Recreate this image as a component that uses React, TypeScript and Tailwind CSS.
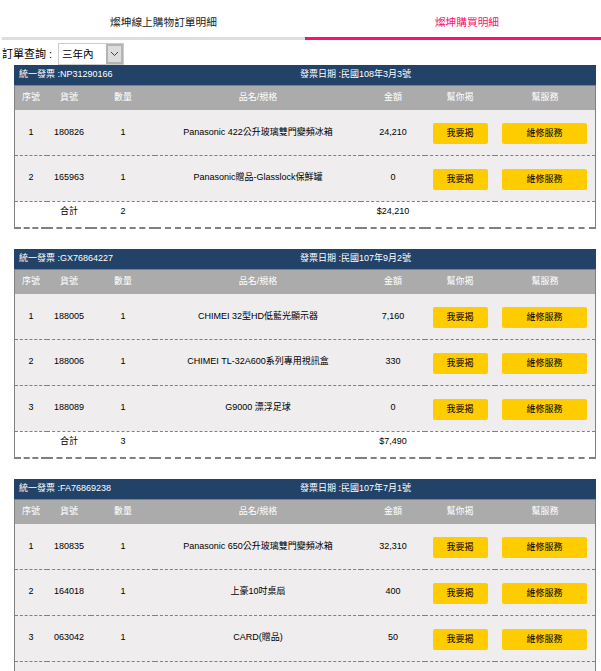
import React from "react";

type Item = { no: string; sku: string; qty: string; name: string; price: string };
type Invoice = { id: string; date: string; items: Item[]; count: string; total: string };

const invoices: Invoice[] = [
  {
    id: "NP31290166",
    date: "民國108年3月3號",
    count: "2",
    total: "$24,210",
    items: [
      { no: "1", sku: "180826", qty: "1", name: "Panasonic 422公升玻璃雙門變頻冰箱", price: "24,210" },
      { no: "2", sku: "165963", qty: "1", name: "Panasonic贈品-Glasslock保鮮罐", price: "0" },
    ],
  },
  {
    id: "GX76864227",
    date: "民國107年9月2號",
    count: "3",
    total: "$7,490",
    items: [
      { no: "1", sku: "188005", qty: "1", name: "CHIMEI 32型HD低藍光顯示器", price: "7,160" },
      { no: "2", sku: "188006", qty: "1", name: "CHIMEI TL-32A600系列專用視訊盒", price: "330" },
      { no: "3", sku: "188089", qty: "1", name: "G9000 漂浮足球", price: "0" },
    ],
  },
  {
    id: "FA76869238",
    date: "民國107年7月1號",
    count: "4",
    total: "$32,760",
    items: [
      { no: "1", sku: "180835", qty: "1", name: "Panasonic 650公升玻璃雙門變頻冰箱", price: "32,310" },
      { no: "2", sku: "164018", qty: "1", name: "上豪10吋桌扇", price: "400" },
      { no: "3", sku: "063042", qty: "1", name: "CARD(贈品)", price: "50" },
      // below the fold in the screenshot
      { no: "4", sku: "063043", qty: "1", name: "CARD(贈品)", price: "0" },
    ],
  },
];

const headers = ["序號", "貨號", "數量", "品名/規格", "金額", "幫你揭", "幫服務"];

function InvoiceTable({ invoice }: { invoice: Invoice }) {
  return (
    <div className="mx-[14px] mb-[20px] w-[582px]">
      {/* Title bar */}
      <div className="flex h-[20px] items-center bg-[#224268] pl-[5px] text-[9px] text-white">
        <div className="w-[281px]">統一發票 :{invoice.id}</div>
        <div>發票日期 :{invoice.date}</div>
      </div>

      <div className="border-x border-t border-[#808080]">
        <table className="w-full table-fixed border-collapse text-center text-[9px] text-black">
          <colgroup>
            <col className="w-[32px]" />
            <col className="w-[44px]" />
            <col className="w-[64px]" />
            <col className="w-[206px]" />
            <col className="w-[64px]" />
            <col className="w-[70px]" />
            <col />
          </colgroup>
          <thead>
            <tr className="h-[24px] bg-[#ababab] text-white">
              {headers.map((h) => (
                <th key={h} className="font-normal">
                  {h}
                </th>
              ))}
            </tr>
          </thead>
          <tbody>
            {invoice.items.map((item, i) => (
              <tr
                key={item.no}
                className={`${i === 0 ? "h-[45px]" : "h-[46px]"} border-b border-dashed border-[#808080] bg-[#efedee]`}
              >
                <td>{item.no}</td>
                <td>{item.sku}</td>
                <td>{item.qty}</td>
                <td>{item.name}</td>
                <td>{item.price}</td>
                <td className="pt-[3px]">
                  <button className="h-[21px] w-[55px] rounded-[2px] bg-[#ffcc00] text-[9px] text-black">我要揭</button>
                </td>
                <td className="pr-[1px] pt-[3px]">
                  <button className="h-[21px] w-[85px] rounded-[2px] bg-[#ffcc00] text-[9px] text-black">維修服務</button>
                </td>
              </tr>
            ))}
            <tr className="h-[27px] border-b-2 border-dashed border-[#808080] bg-white">
              <td></td>
              <td className="pb-[6px]">合計</td>
              <td className="pb-[6px]">{invoice.count}</td>
              <td></td>
              <td className="pb-[6px]">{invoice.total}</td>
              <td></td>
              <td></td>
            </tr>
          </tbody>
        </table>
      </div>
    </div>
  );
}

export default function App() {
  return (
    <div
      className="h-[671px] w-[601px] overflow-hidden bg-white"
      style={{ fontFamily: '"Liberation Sans", "Noto Sans CJK TC", sans-serif' }}
    >
      {/* Tabs */}
      <div className="flex pl-[2px] pt-[13px] text-[10.7px]">
        <div className="h-[27px] w-[303px] border-b-[3px] border-[#dddddd] pl-[20px] pt-[2px] text-center leading-[15px] text-[#222222]">
          燦坤線上購物訂單明細
        </div>
        <div className="h-[27px] w-[296px] border-b-[3px] border-[#ff0f6e] pl-[28px] pt-[2px] text-center leading-[15px] text-[#ff0f6e]">
          燦坤購買明細
        </div>
      </div>

      {/* Filter */}
      <div className="flex h-[25px] items-center pl-[2px] pt-[3px] text-[11px] text-black">
        <span className="w-[56px]">訂單查詢 :</span>
        <div className="flex h-[22px] w-[66px] border border-[#cccccc] bg-white">
          <span className="flex-1 pl-[3px] text-[10.5px] leading-[20px]">三年內</span>
          <div className="flex w-[17px] items-center justify-center border-2 border-[#b4b4b4] bg-[#dddddd]">
            <svg width="9" height="6" viewBox="0 0 9 6" fill="none" stroke="#444444" strokeWidth="1">
              <path d="M1 1l3.5 3.5L8 1" />
            </svg>
          </div>
        </div>
      </div>

      {invoices.map((invoice) => (
        <InvoiceTable key={invoice.id} invoice={invoice} />
      ))}
    </div>
  );
}
